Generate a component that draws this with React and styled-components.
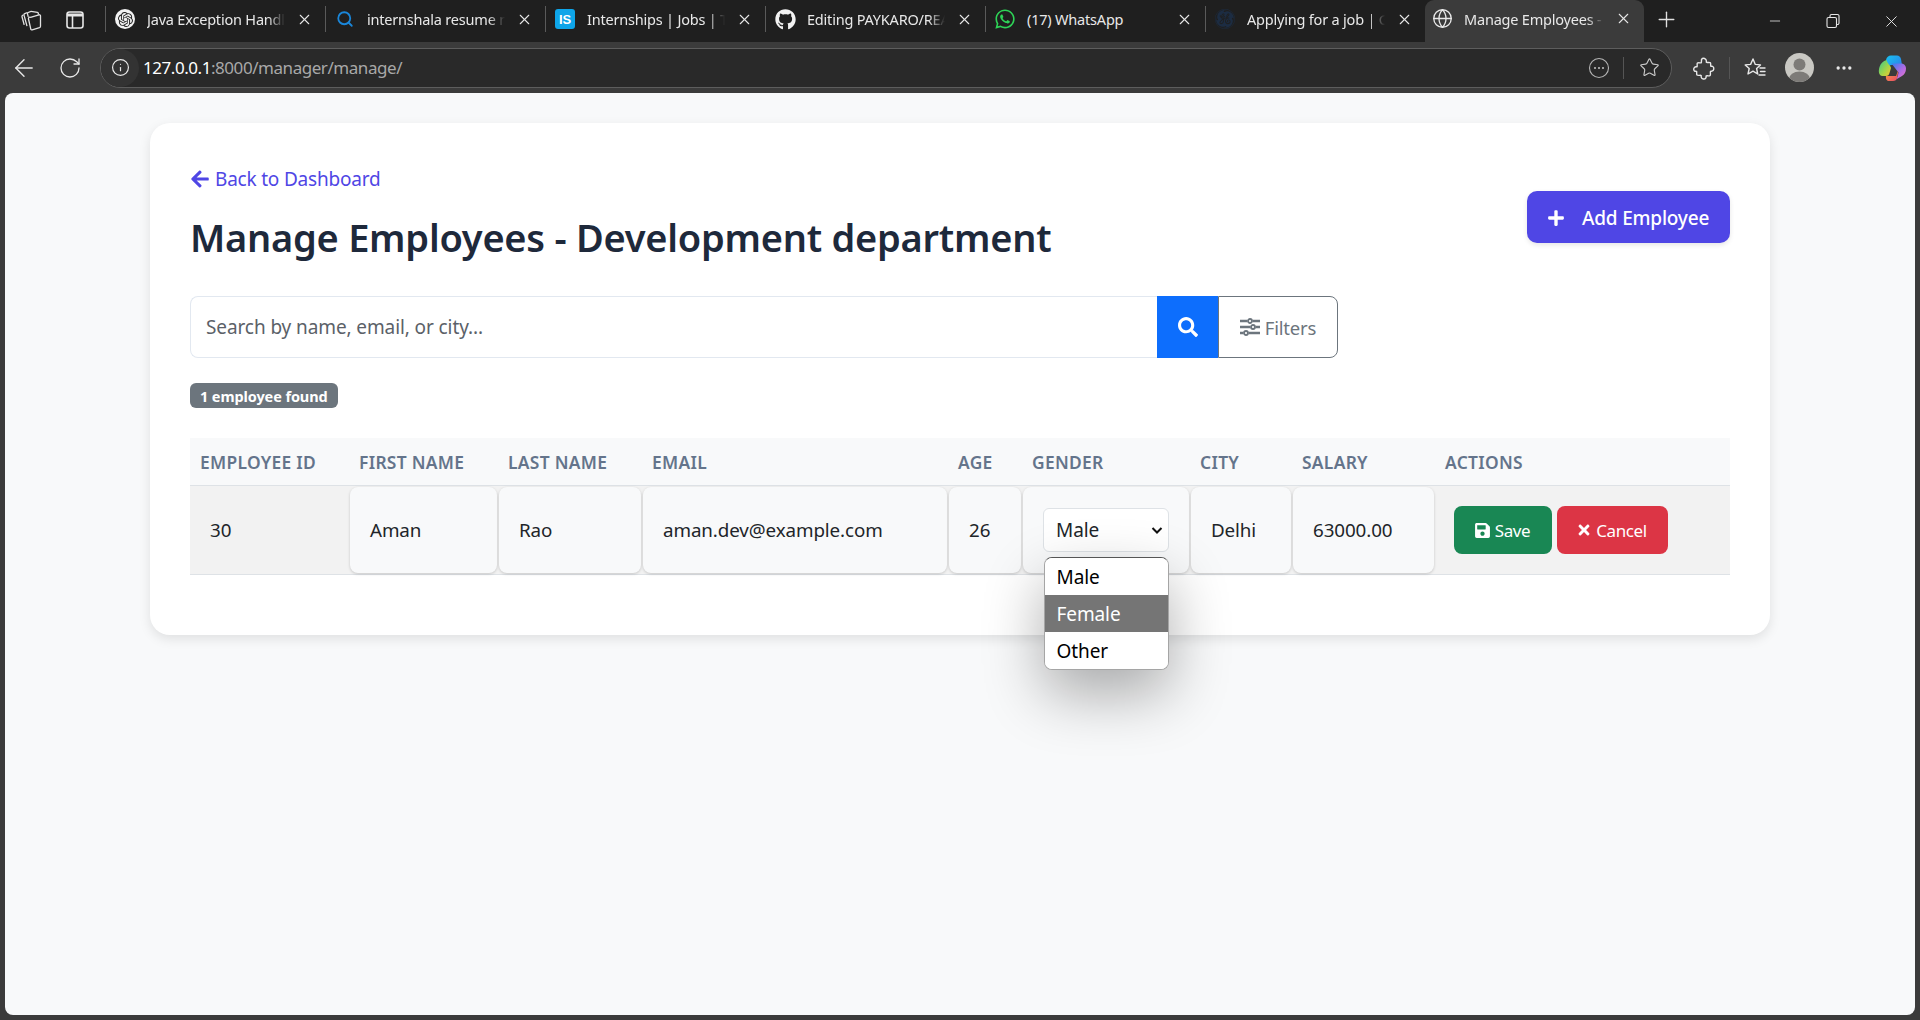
import React from "react";
import styled, { createGlobalStyle } from "styled-components";
import { FaArrowLeft, FaPlus, FaSearch, FaSave, FaTimes, FaGithub, FaWhatsapp } from "react-icons/fa";
import { SiOpenai, SiGeneralelectric } from "react-icons/si";
import { Search, Globe, X, Plus, Minus, RotateCw, ArrowLeft, Info, Ellipsis, Star } from "lucide-react";

const Global = createGlobalStyle`
  html, body { margin: 0; padding: 0; background: #3b3b3b; }
  * { box-sizing: border-box; }
  body { font-family: "Noto Sans", "Open Sans", sans-serif; }
`;

const Shell = styled.div`display:flex;flex-direction:column;height:100vh;background:#3b3b3b;overflow:hidden;`;
const TabStrip = styled.div`display:flex;align-items:center;height:42px;background:#1f1f1f;color:#e8e8e8;flex:none;`;
const SideTools = styled.div`display:flex;align-items:center;width:105px;height:100%;padding:0 0 3px 19px;gap:22px;flex:none;`;
const Tab = styled.div`
  display:flex;align-items:center;width:${p=>p.$active?219:220}px;height:${p=>p.$active?"42px":"26px"};flex:none;
  padding:${p=>p.$active?"0 12px 5px 6px":"0 12px 0 8px"};gap:11px;font-size:14.5px;letter-spacing:-0.2px;
  border-left:${p=>p.$active?"none":"1px solid #5a5a5a"};
  background:${p=>p.$active?"#3b3b3b":"transparent"};
  border-radius:${p=>p.$active?"9px 9px 0 0":"0"};
  margin-top:${p=>p.$active?"0":"-4px"};
`;
const Favicon = styled.span`display:flex;align-items:center;justify-content:center;width:22px;height:22px;flex:none;`;
const OpenAiBadge = styled.span`display:flex;align-items:center;justify-content:center;width:20px;height:20px;border-radius:50%;background:#f2f2f2;color:#222;`;
const IsLogo = styled.span`display:flex;align-items:center;justify-content:center;width:20px;height:20px;border-radius:3px;background:#0ea5e9;color:#fff;font:700 13px "Liberation Sans",sans-serif;`;
const TabTitle = styled.span`
  flex:1;min-width:0;white-space:nowrap;overflow:hidden;
  -webkit-mask-image:linear-gradient(90deg,#000 88%,transparent);
  mask-image:linear-gradient(90deg,#000 88%,transparent);
`;
const PlainTitle = styled.span`flex:1;min-width:0;white-space:nowrap;`;
const Close = styled.span`display:flex;flex:none;color:#e6e6e6;`;
const NewTab = styled.span`display:flex;margin:-3px 0 0 10px;color:#e0e0e0;`;
const Grow = styled.div`flex:1;`;
const WinBtn = styled.span`display:flex;justify-content:center;align-items:center;width:58px;color:#e6e6e6;`;
const WinBtns = styled.div`display:flex;`;

const Toolbar = styled.div`display:flex;align-items:center;height:51px;flex:none;background:#3b3b3b;color:#e8e8e8;`;
const NavBtn = styled.span`display:flex;justify-content:center;align-items:center;width:${p=>p.$w||45}px;flex:none;`;
const AddressBar = styled.div`
  display:flex;align-items:center;margin-left:8px;width:1572px;height:40px;flex:none;
  background:#292929;border:1px solid #5d5d5d;border-radius:20px;padding:0 10px 0 0;font-size:17px;letter-spacing:-0.45px;
`;
const InfoWrap = styled.span`display:flex;justify-content:center;align-items:center;width:38px;height:38px;border-radius:50%;background:#333;flex:none;`;
const Host = styled.span`color:#fff;margin-left:4px;`;
const Path = styled.span`color:#a8a8a8;`;
const Divider = styled.span`width:1px;height:22px;background:#555;margin:0 ${p=>p.$m||13}px;flex:none;`;
const RightTools = styled.div`display:flex;align-items:center;flex:1;`;
const Avatar = styled.span`display:flex;width:29px;height:29px;border-radius:50%;overflow:hidden;background:#c9c8c3;flex:none;margin-left:${p=>p.$ml}px;`;
const Tool = styled.span`display:flex;justify-content:center;align-items:center;width:${p=>p.$w||24}px;margin-left:${p=>p.$ml||0}px;flex:none;`;

const Viewport = styled.div`flex:1;margin:0 5px 5px;background:#f8f9fa;border-radius:8px;padding-top:30px;min-height:0;`;
const Card = styled.div`
  width:1620px;margin:0 auto;background:#fff;border-radius:20px;padding:40px 40px 60px;
  box-shadow:0 4px 12px rgba(0,0,0,.1);
`;
const Header = styled.div`display:flex;justify-content:space-between;align-items:center;height:108px;`;
const BackLink = styled.a`display:flex;align-items:center;gap:5px;margin-top:1px;color:#4f46e5;font-size:19px;letter-spacing:-0.2px;height:30px;`;
const Title = styled.h1`margin:17px 0 8px;font-size:38px;font-weight:600;line-height:52px;color:#1e293b;letter-spacing:-0.25px;`;
const AddBtn = styled.button`
  display:flex;align-items:center;gap:17px;height:52px;width:203px;padding:1px 20px 0;border:none;border-radius:10px;
  background:#4f46e5;color:#fff;font:500 19px "Noto Sans",sans-serif;letter-spacing:-0.2px;box-shadow:0 2px 5px rgba(0,0,0,.1);
`;
const SearchRow = styled.div`display:flex;width:1148px;height:62px;margin-top:25px;`;
const SearchInput = styled.div`
  flex:1;display:flex;align-items:center;padding:0 15px;border:1px solid #e2e8f0;border-right:none;border-radius:8px 0 0 8px;
  color:#5b6168;font-size:19px;letter-spacing:-0.1px;
`;
const SearchBtn = styled.div`display:flex;justify-content:center;align-items:center;width:61px;background:#0d6efd;color:#fff;flex:none;`;
const FilterBtn = styled.div`
  display:flex;align-items:center;justify-content:center;gap:5px;width:120px;flex:none;color:#6c757d;font-size:18.5px;letter-spacing:-0.2px;
  border:1px solid #6c757d;border-radius:0 8px 8px 0;
`;
const Badge = styled.div`
  display:inline-flex;align-items:center;height:25px;margin-top:25px;padding:0 10px;border-radius:6px;background:#6c757d;color:#fff;
  font-size:14.5px;font-weight:700;letter-spacing:-0.1px;
`;
const BadgeRow = styled.div`display:flex;height:50px;`;
const Table = styled.table`width:1540px;table-layout:fixed;border-collapse:separate;border-spacing:0;margin-top:30px;`;
const Th = styled.th`
  width:${p=>p.$w}px;height:48px;padding:0 10px;text-align:left;background:#f8f9fa;color:#64748b;font-size:17.4px;font-weight:600;
  letter-spacing:.3px;text-transform:uppercase;border-bottom:1px solid #dee2e6;white-space:nowrap;
`;
const Td = styled.td`height:89px;padding:1px;background:#f2f2f2;border-bottom:1px solid #dee2e6;font-size:18.8px;color:#212529;`;
const PlainTd = styled(Td)`padding:0 20px;`;
const Editable = styled.div`
  display:flex;align-items:center;height:86px;padding:0 20px;background:#f8f9fa;border-radius:8px;
  box-shadow:0 1px 3px rgba(0,0,0,.18);letter-spacing:-0.1px;position:relative;white-space:nowrap;
`;
const SelectBox = styled.div`
  display:flex;align-items:center;justify-content:space-between;width:126px;height:44px;padding:0 4px 0 12px;background:#fff;
  border:1px solid #dee2e6;border-radius:6px;font-size:19px;color:#212529;
`;
const Menu = styled.div`
  position:absolute;left:21px;top:70px;width:125px;background:#fff;border-radius:8px;overflow:hidden;z-index:5;
  border:1px solid #a5a5a5;border-top-color:#555;box-shadow:0 24px 60px rgba(0,0,0,.32);color:#000;font-size:19px;
`;
const Option = styled.div`
  display:flex;align-items:center;height:37px;padding:0 11.500px 0 11.500px;background:${p=>p.$on?"#757575":"#fff"};color:${p=>p.$on?"#fff":"#000"};
`;
const Actions = styled.div`display:flex;gap:5px;padding-left:18px;`;
const ActBtn = styled.button`
  display:flex;align-items:center;justify-content:center;gap:4px;width:${p=>p.$w}px;height:48px;border:none;border-radius:8px;
  background:${p=>p.$bg};color:#fff;font:400 17px "Noto Sans",sans-serif;letter-spacing:-0.4px;padding:0 2px 0 0;
`;

const Layers = () => (
  <svg width="24" height="24" viewBox="0 0 24 24" fill="none" stroke="#e2e2e2" strokeWidth="1.3" strokeLinejoin="round">
    <path d="M4.500 6.800l-.9.500a1.200 1.200 0 0 0-.6 1.400l2.200 8.200" />
    <path d="M8.500 4.500l-2.800 1.200a1.200 1.200 0 0 0-.7 1.400l3 11" />
    <path d="M12 3.300l-2.800 1.200a1.200 1.200 0 0 0-.7 1.400l.800 3" />
    <path d="M11.500 9.300L20 6.800a1.200 1.200 0 0 1 1.500 1.100v10.400a1.500 1.500 0 0 1-1 1.400l-7.300 2.200a1.100 1.100 0 0 1-1.400-.8L9.500 11a1.400 1.400 0 0 1 2-1.700z" />
    <path d="M12 3.300l6.500 1a1 1 0 0 1 .8.800l.1 1.500" />
  </svg>
);
const SideTabs = () => (
  <svg width="20" height="20" viewBox="0 0 20 20" fill="none" stroke="#e6e6e6" strokeWidth="1.6">
    <rect x="2" y="2" width="16" height="16" rx="2.500" />
    <path d="M2 5h16" strokeWidth="3" />
    <path d="M7.500 5v13" />
  </svg>
);
const Restore = () => (
  <svg width="16" height="16" viewBox="0 0 16 16" fill="none" stroke="#e6e6e6" strokeWidth="1.1">
    <rect x="2" y="4.500" width="9.500" height="10" rx="1.500" />
    <path d="M5 4.500V3a1.500 1.500 0 0 1 1.500-1.500h6A1.500 1.500 0 0 1 14 3v7a1.500 1.500 0 0 1-1.500 1.500h-1" />
  </svg>
);
const DotsCircle = () => (
  <svg width="22" height="22" viewBox="0 0 22 22" fill="none">
    <circle cx="11" cy="11" r="9.500" stroke="#b5b5b5" strokeWidth="1.1" />
    <circle cx="7" cy="11" r="1" fill="#c5c5c5" />
    <circle cx="11" cy="11" r="1" fill="#c5c5c5" />
    <circle cx="15" cy="11" r="1" fill="#c5c5c5" />
  </svg>
);
const PuzzlePiece = () => (
  <svg width="24" height="24" viewBox="0 0 24 24" fill="none" stroke="#e8e8e8" strokeWidth="1.4" strokeLinejoin="round">
    <path d="M9.500 3.500a2.700 2.700 0 0 1 4.900 1.500c0 .6-.2 1 0 1.400.3.400 3.300-.4 4 .4.600.7 0 3 .4 3.400.5.400 1.300-.2 2 .3a2.700 2.700 0 0 1-.9 4.700c-.7.200-1.200-.2-1.500.3-.3.500.5 3.100-.3 3.900-.8.800-3.200.200-3.800.5-.5.400.1 1.200-.4 1.900a2.600 2.600 0 0 1-4.700-.7c-.2-.8.300-1.300-.1-1.700-.4-.4-3.400.4-4.100-.3-.7-.7-.100-3.300-.4-3.700-.3-.4-1.500.2-2.200-.5a2.500 2.500 0 0 1 1.400-4.200c.7 0 1 .3 1.300 0 .4-.3-.4-2.900.3-3.600.7-.7 3.300 0 3.800-.3.500-.4 0-1.300.3-2.300z" />
  </svg>
);
const FavStar = () => (
  <svg width="24" height="24" viewBox="0 0 24 24" fill="none" stroke="#e8e8e8" strokeWidth="1.4" strokeLinejoin="round" strokeLinecap="round">
    <path d="M10 3l2.300 5.400 5.200.5-3.900 3.600 1.100 5.500L10 15.200 5 18l1.200-5.500L2.200 8.900l5.400-.5z" />
    <path d="M17 12h5M17.500 15.500h4.500M16 19h6" />
  </svg>
);
const SliderIcon = () => (
  <svg width="20" height="20" viewBox="0 0 20 20" fill="none" stroke="#6c757d" strokeWidth="2.300">
    <path d="M0 4h7.500M12.500 4H20M0 10h10.500M15.500 10H20M0 16h3.500M8.500 16H20" />
    <circle cx="10" cy="4" r="2" strokeWidth="1.800" />
    <circle cx="13" cy="10" r="2" strokeWidth="1.800" />
    <circle cx="6" cy="16" r="2" strokeWidth="1.800" />
  </svg>
);
const Person = () => (
  <svg width="29" height="29" viewBox="0 0 29 29">
    <circle cx="14.500" cy="11.500" r="6" fill="#7d7b78" />
    <ellipse cx="14.500" cy="26" rx="10.500" ry="7.500" fill="#7d7b78" />
  </svg>
);
const Copilot = () => (
  <svg width="28" height="28" viewBox="0 0 28 28">
    <defs>
      <linearGradient id="cpA" x1="0" y1="0" x2="1" y2="1"><stop offset="0" stopColor="#19c3f0" /><stop offset="1" stopColor="#2f6ee8" /></linearGradient>
      <linearGradient id="cpB" x1="0" y1="0" x2="1" y2="1"><stop offset="0" stopColor="#2f7ff0" /><stop offset=".55" stopColor="#b06be4" /><stop offset="1" stopColor="#ee78c4" /></linearGradient>
      <linearGradient id="cpC" x1="0" y1="0" x2="1" y2="1"><stop offset="0" stopColor="#37c98a" /><stop offset=".6" stopColor="#a8d546" /><stop offset="1" stopColor="#f7c531" /></linearGradient>
      <linearGradient id="cpD" x1="0" y1="0" x2="1" y2="1"><stop offset="0" stopColor="#f9a13a" /><stop offset="1" stopColor="#e8486a" /></linearGradient>
    </defs>
    <path d="M8 6c.7-3 2.500-4.500 5-4.500h6c2 0 3.500 1.200 4 3.500l1 6H13.500c-2 0-3 1-3.500 3l-2 7z" fill="url(#cpA)" />
    <path d="M13.500 9.500H23c3 0 5 2.200 5 5 0 3.500-1.500 6-4 7.500l-6 3.500c1.500-2 2-4 2.500-7z" fill="url(#cpB)" />
    <path d="M8.500 6C5 7 3 9 1.500 13 .3 16.500 .5 22 4.500 22H8c2 0 3-1 3.500-3l1.500-5c-.5-3-3.500-4-4.500-8z" fill="url(#cpC)" />
    <path d="M8 22h10l2.500-6.500-1.300 8c-.5 2.500-2 3.500-4.200 3.500h-4c-2 0-3.500-2-3-5z" fill="url(#cpD)" />
  </svg>
);

const tabs = [
  { t: "Java Exception Handling in Spring", i: <OpenAiBadge><SiOpenai size={15} /></OpenAiBadge> },
  { t: "internshala resume maker online", i: <Search size={18} color="#1a86d9" strokeWidth={2.4} /> },
  { t: "Internships | Jobs | Training", i: <IsLogo>IS</IsLogo> },
  { t: "Editing PAYKARO/README.md", i: <FaGithub size={21} color="#f2f2f2" /> },
  { t: "(17) WhatsApp", i: <FaWhatsapp size={22} color="#2ed457" />, plain: true },
  { t: "Applying for a job | GE Careers", i: <SiGeneralelectric size={20} color="#1c2c42" /> },
];

export default function App() {
  return (
    <Shell>
      <Global />
      <TabStrip>
        <SideTools><Layers /><SideTabs /></SideTools>
        {tabs.map((x) => (
          <Tab key={x.t}>
            <Favicon>{x.i}</Favicon>
            {x.plain ? <PlainTitle>{x.t}</PlainTitle> : <TabTitle>{x.t}</TabTitle>}
            <Close><X size={17} strokeWidth={1.5} /></Close>
          </Tab>
        ))}
        <Tab $active>
          <Favicon><Globe size={21} strokeWidth={1.5} /></Favicon>
          <TabTitle>Manage Employees - Development</TabTitle>
          <Close><X size={17} strokeWidth={1.5} /></Close>
        </Tab>
        <NewTab><Plus size={25} strokeWidth={1.3} /></NewTab>
        <Grow />
        <WinBtns>
          <WinBtn><Minus size={16} strokeWidth={1.2} /></WinBtn>
          <WinBtn><Restore /></WinBtn>
          <WinBtn><X size={19} strokeWidth={1.2} /></WinBtn>
        </WinBtns>
      </TabStrip>
      <Toolbar>
        <NavBtn $w={47}><ArrowLeft size={28} strokeWidth={1.2} /></NavBtn>
        <NavBtn $w={45}><RotateCw size={24} strokeWidth={1.3} /></NavBtn>
        <AddressBar>
          <InfoWrap><Info size={19} strokeWidth={1.5} /></InfoWrap>
          <Host>127.0.0.1</Host><Path>:8000/manager/manage/</Path>
          <Grow />
          <Tool $w={22}><DotsCircle /></Tool>
          <Divider />
          <Tool $w={24}><Star size={21} strokeWidth={1.3} color="#c9c9c9" /></Tool>
        </AddressBar>
        <RightTools>
          <Tool $ml={20}><PuzzlePiece /></Tool>
          <Divider />
          <Tool><FavStar /></Tool>
          <Avatar $ml={18}><Person /></Avatar>
          <Tool $ml={18}><Ellipsis size={20} /></Tool>
          <Tool $w={28} $ml={22}><Copilot /></Tool>
        </RightTools>
      </Toolbar>
      <Viewport>
        <Card>
          <Header>
            <div>
              <BackLink><FaArrowLeft size={20} /> Back to Dashboard</BackLink>
              <Title>Manage Employees - Development department</Title>
            </div>
            <AddBtn><FaPlus size={18} /> Add Employee</AddBtn>
          </Header>
          <SearchRow>
            <SearchInput>Search by name, email, or city...</SearchInput>
            <SearchBtn><FaSearch size={20} /></SearchBtn>
            <FilterBtn><SliderIcon /> Filters</FilterBtn>
          </SearchRow>
          <BadgeRow><Badge>1 employee found</Badge></BadgeRow>
          <Table>
            <thead>
              <tr>
                <Th $w={159}>Employee ID</Th>
                <Th $w={149}>First Name</Th>
                <Th $w={144}>Last Name</Th>
                <Th $w={306}>Email</Th>
                <Th $w={74}>Age</Th>
                <Th $w={168}>Gender</Th>
                <Th $w={102}>City</Th>
                <Th $w={143}>Salary</Th>
                <Th $w={295}>Actions</Th>
              </tr>
            </thead>
            <tbody>
              <tr>
                <PlainTd>30</PlainTd>
                <Td><Editable>Aman</Editable></Td>
                <Td><Editable>Rao</Editable></Td>
                <Td><Editable>aman.dev@example.com</Editable></Td>
                <Td><Editable>26</Editable></Td>
                <Td>
                  <Editable>
                    <SelectBox>
                      Male
                      <svg width="14" height="14" viewBox="0 0 14 14" fill="none" stroke="#111" strokeWidth="2"><path d="M2.500 5l4.500 4.500L11.500 5" /></svg>
                    </SelectBox>
                    <Menu>
                      <Option>Male</Option>
                      <Option $on>Female</Option>
                      <Option>Other</Option>
                    </Menu>
                  </Editable>
                </Td>
                <Td><Editable>Delhi</Editable></Td>
                <Td><Editable>63000.00</Editable></Td>
                <Td>
                  <Actions>
                    <ActBtn $w={98} $bg="#198754"><FaSave size={17} /> Save</ActBtn>
                    <ActBtn $w={111} $bg="#dc3545"><FaTimes size={16} /> Cancel</ActBtn>
                  </Actions>
                </Td>
              </tr>
            </tbody>
          </Table>
        </Card>
      </Viewport>
    </Shell>
  );
}
